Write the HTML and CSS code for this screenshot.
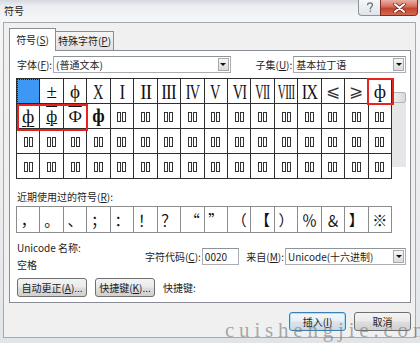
FILE: index.html
```html
<!DOCTYPE html>
<html lang="zh">
<head>
<meta charset="utf-8">
<title>符号</title>
<link rel="stylesheet" href="styles.css">
</head>
<body>
<div class="window">
  <div class="titlebar">
    <div class="title">符号</div>
    <div class="caption">
      <div class="cap-help">
        <svg width="8" height="11" viewBox="0 0 8 11"><path d="M1.5 3.2 C1.5 1.6 2.6 0.8 4 0.8 C5.5 0.8 6.5 1.7 6.5 3 C6.5 4.6 4.4 4.8 4.4 6.6 L4.4 7.4" fill="none" stroke="#6d7680" stroke-width="1.3"/><rect x="3.7" y="8.6" width="1.4" height="1.4" fill="#6d7680"/></svg>
      </div>
      <div class="cap-close">
        <svg width="13" height="10" viewBox="0 0 13 10"><path d="M2 1.2 L11 8.8 M11 1.2 L2 8.8" stroke="#6b2318" stroke-width="3.4" stroke-linecap="round"/><path d="M2 1.2 L11 8.8 M11 1.2 L2 8.8" stroke="#fff" stroke-width="2" stroke-linecap="round"/></svg>
      </div>
    </div>
  </div>

  <div class="client">
    <div class="tabs">
      <div class="tab sel">符号(<u>S</u>)</div>
      <div class="tab other">特殊字符(<u>P</u>)</div>
    </div>

    <div class="panel">
      <div class="font-row">
        <span class="lbl l-font">字体(<u>F</u>):</span>
        <div class="combo c-font"><span class="val">(普通文本)</span><span class="arrow"></span></div>
        <span class="lbl l-subset">子集(<u>U</u>):</span>
        <div class="combo c-subset"><span class="val">基本拉丁语</span><span class="arrow"></span></div>
      </div>

      <div class="grid-area">
        <div class="grid">
          <div class="c cur"></div>
          <div class="c">±</div>
          <div class="c">ϕ</div>
          <div class="c"><span class="r r-x">X</span></div>
          <div class="c"><span class="r r-i">I</span></div>
          <div class="c"><span class="r r-ii">II</span></div>
          <div class="c"><span class="r r-iii">III</span></div>
          <div class="c"><span class="r r-iv">IV</span></div>
          <div class="c"><span class="r r-v">V</span></div>
          <div class="c"><span class="r r-vi">VI</span></div>
          <div class="c"><span class="r r-vii">VII</span></div>
          <div class="c"><span class="r r-viii">VIII</span></div>
          <div class="c"><span class="r r-ix">IX</span></div>
          <div class="c ineq">⩽</div>
          <div class="c ineq">⩾</div>
          <div class="c">ф</div>

          <div class="c"><span class="ph-u">ф</span></div>
          <div class="c"><span class="ph-uo">ф</span></div>
          <div class="c"><span class="ph-o">Ф</span></div>
          <div class="c"><span class="ph-b">ф</span></div>
          <div class="c t"></div><div class="c t"></div><div class="c t"></div><div class="c t"></div>
          <div class="c t"></div><div class="c t"></div><div class="c t"></div><div class="c t"></div>
          <div class="c t"></div><div class="c t"></div><div class="c t"></div><div class="c t"></div>

          <div class="c t"></div><div class="c t"></div><div class="c t"></div><div class="c t"></div>
          <div class="c t"></div><div class="c t"></div><div class="c t"></div><div class="c t"></div>
          <div class="c t"></div><div class="c t"></div><div class="c t"></div><div class="c t"></div>
          <div class="c t"></div><div class="c t"></div><div class="c t"></div><div class="c t"></div>

          <div class="c t"></div><div class="c t"></div><div class="c t"></div><div class="c t"></div>
          <div class="c t"></div><div class="c t"></div><div class="c t"></div><div class="c t"></div>
          <div class="c t"></div><div class="c t"></div><div class="c t"></div><div class="c t"></div>
          <div class="c t"></div><div class="c t"></div><div class="c t"></div><div class="c t"></div>

          <div class="mark m1"></div>
          <div class="mark m2"></div>
        </div>
        <div class="vscroll"><div class="thumb"></div><div class="track"></div></div>
      </div>

      <div class="recent-lbl">近期使用过的符号(<u>R</u>):</div>
      <div class="recent">
        <div class="rc">，</div><div class="rc">。</div><div class="rc">、</div><div class="rc">；</div>
        <div class="rc">：</div><div class="rc">！</div><div class="rc">？</div><div class="rc">“</div>
        <div class="rc">”</div><div class="rc">（</div><div class="rc">【</div><div class="rc">）</div>
        <div class="rc">％</div><div class="rc">＆</div><div class="rc">】</div><div class="rc">※</div>
      </div>

      <div class="info">
        <div class="name"><div>Unicode 名称:</div><div>空格</div></div>
        <span class="lbl">字符代码(<u>C</u>):</span>
        <div class="edit">0020</div>
        <span class="lbl l-from">来自(<u>M</u>):</span>
        <div class="combo c-from"><span class="val">Unicode(十六进制)</span><span class="arrow"></span></div>
      </div>

      <div class="btnrow">
        <div class="btn b-auto">自动更正(<u>A</u>)...</div>
        <div class="btn b-key">快捷键(<u>K</u>)...</div>
        <span class="lbl l-key">快捷键:</span>
      </div>
    </div>

    <div class="footer">
      <div class="btn b-ok">插入(<u>I</u>)</div>
      <div class="btn b-cancel">取消</div>
    </div>
  </div>

  <div class="watermark">cuishengjie.com</div>
</div>
</body>
</html>
```

FILE: styles.css
```css
body {
  margin: 0;
}

.window {
  position: relative;
  width: 420px;
  height: 343px;
  overflow: hidden;
  background: linear-gradient(180deg, #d5d9de 0px, #eceef1 6px, #f5f6f7 20px, #e2e5e8 100%);
  font-family: "Noto Sans CJK SC", "Liberation Sans", sans-serif;
  font-size: 10px;
  color: #1c1c1c;
}

u {
  text-decoration: underline;
  text-underline-offset: 1px;
}

/* title bar */
.titlebar {
  height: 22px;
  display: flex;
}

.title {
  margin: 4px 0 0 4px;
  line-height: 14px;
  font-size: 10px;
  color: #222;
}

.caption {
  margin-left: auto;
  margin-right: 2px;
  display: flex;
  height: 16px;
}

.cap-help {
  width: 22px;
  height: 16px;
  box-sizing: border-box;
  border: 1px solid #8b939b;
  border-top: none;
  border-right: none;
  border-radius: 0 0 0 4px;
  background: linear-gradient(#f6f8fa, #dfe4e9);
  display: flex;
  align-items: center;
  justify-content: center;
}

.cap-close {
  width: 38px;
  height: 16px;
  box-sizing: border-box;
  border: 1px solid #7b2e24;
  border-top: none;
  border-radius: 0 0 4px 0;
  background: linear-gradient(#e9b0a4, #d86a58 45%, #c5432f 55%, #d46a52);
  display: flex;
  align-items: center;
  justify-content: center;
}

/* client area */
.client {
  margin: 0 4px 0 3px;
  height: 316px;
  box-sizing: border-box;
  border: 1px solid #a3aab2;
  background: #f0f0f0;
  padding: 5px 4px 0 5px;
}

.tabs {
  position: relative;
  z-index: 1;
  display: flex;
  align-items: flex-end;
  height: 23px;
  margin-bottom: -1px;
}

.tab {
  box-sizing: border-box;
  border: 1px solid #898c95;
  display: flex;
  align-items: center;
  justify-content: center;
  line-height: 14px;
}

.tab.sel {
  width: 47px;
  height: 23px;
  border-bottom: none;
  background: #fff;
  padding-bottom: 1px;
}

.tab.other {
  width: 58px;
  height: 20px;
  border-left: none;
  background: linear-gradient(#f4f4f4, #e2e2e2);
}

.panel {
  height: 253px;
  box-sizing: border-box;
  border: 1px solid #898c95;
  background: #fff;
  padding: 5px 4px 0 6px;
}

.lbl {
  white-space: nowrap;
  line-height: 14px;
}

/* font row */
.font-row {
  display: flex;
  align-items: center;
  height: 17px;
}

.l-font {
  margin-left: 1px;
}

.combo {
  box-sizing: border-box;
  height: 17px;
  border: 1px solid #abadb3;
  border-top-color: #8e9299;
  background: #fff;
  display: flex;
  align-items: center;
  margin-left: 1px;
}

.combo .val {
  flex: 1;
  padding-left: 2px;
  line-height: 14px;
  white-space: nowrap;
}

.combo .arrow {
  width: 11px;
  height: 13px;
  margin-right: 1px;
  box-sizing: border-box;
  border: 1px solid #a9a9a9;
  background: linear-gradient(#f7f7f7, #dadada);
  display: flex;
  align-items: center;
  justify-content: center;
}

.combo .arrow::after {
  content: "";
  border-left: 3px solid transparent;
  border-right: 3px solid transparent;
  border-top: 3px solid #111;
}

.c-font {
  width: 181px;
}

.l-subset {
  margin-left: 25px;
}

.c-subset {
  width: 115px;
}

/* symbol grid */
.grid-area {
  display: flex;
  margin-top: 5px;
}

.grid {
  position: relative;
  width: 376px;
  box-sizing: border-box;
  display: grid;
  grid-template-columns: repeat(16, 1fr);
  grid-auto-rows: 25px;
  border-left: 1px solid #2e2e2e;
  border-top: 1px solid #2e2e2e;
}

.c {
  border-right: 1px solid #2e2e2e;
  border-bottom: 1px solid #2e2e2e;
  display: flex;
  align-items: center;
  justify-content: center;
  font-family: "Liberation Serif", serif;
  font-size: 19px;
  line-height: 1;
  overflow: hidden;
  color: #111;
}

.c.cur {
  background: #3d98f5;
  outline: 1px dotted #1a1a1a;
  outline-offset: -1px;
}

.r {
  display: inline-block;
  font-size: 20px;
  padding-top: 2px;
  white-space: nowrap;
}

.r-x { transform: scaleX(0.72); }
.r-i { transform: scaleX(0.85); }
.r-ii { transform: scaleX(0.95); letter-spacing: -1px; }
.r-iii { transform: scaleX(0.85); letter-spacing: -1px; }
.r-iv { transform: scaleX(0.72); letter-spacing: -1px; }
.r-v { transform: scaleX(0.72); }
.r-vi { transform: scaleX(0.72); letter-spacing: -1px; }
.r-vii { transform: scaleX(0.58); letter-spacing: -1px; }
.r-viii { transform: scaleX(0.55); letter-spacing: -1px; }
.r-ix { transform: scaleX(0.82); letter-spacing: -1px; }

.ineq {
  font-family: "DejaVu Sans", sans-serif;
  font-weight: 200;
  font-size: 17px;
  color: #333;
}

.ph-u {
  text-decoration: underline;
  text-underline-offset: 3px;
  text-decoration-thickness: 1px;
}

.ph-uo {
  text-decoration: underline overline;
  text-decoration-thickness: 1px;
  font-size: 17px;
}

.ph-o {
  text-decoration: overline;
  text-decoration-thickness: 1px;
  font-size: 17px;
}

.ph-b {
  font-weight: bold;
  font-size: 18px;
}

.c.t {
  gap: 1px;
  padding-top: 1px;
}

.c.t::before,
.c.t::after {
  content: "";
  display: block;
  width: 2px;
  height: 8px;
  border: 1px solid #333;
}

.mark {
  position: absolute;
  box-sizing: border-box;
  border: 2px solid #e8231f;
}

.m1 {
  left: 350px;
  top: -1px;
  width: 27px;
  height: 27px;
}

.m2 {
  left: 0;
  top: 25px;
  width: 71px;
  height: 27px;
}

.vscroll {
  width: 14px;
  height: 101px;
  box-sizing: border-box;
  padding-top: 14px;
  display: flex;
  flex-direction: column;
}

.thumb {
  height: 11px;
  box-sizing: border-box;
  border: 1px solid #b3b3b3;
  border-radius: 2px;
  background: linear-gradient(90deg, #f0f0f0, #d8d8d8);
}

.track {
  height: 64px;
  background: #e6e6e6;
}

/* recent */
.recent-lbl {
  margin-top: 11px;
  line-height: 14px;
  padding-left: 1px;
}

.recent {
  margin-top: 2px;
  width: 376px;
  height: 27px;
  box-sizing: border-box;
  display: grid;
  grid-template-columns: repeat(16, 1fr);
  border: 1px solid #8c8c8c;
  border-right: none;
}

.rc {
  border-right: 1px solid #8c8c8c;
  display: flex;
  align-items: center;
  justify-content: center;
  font-family: "Noto Sans CJK SC", sans-serif;
  font-size: 15px;
  line-height: 1;
  color: #111;
}

/* info */
.info {
  margin-top: 8px;
  height: 31px;
  display: flex;
  align-items: center;
}

.name {
  width: 130px;
  padding-left: 1px;
  display: flex;
  flex-direction: column;
  gap: 3px;
  line-height: 14px;
}

.edit {
  width: 38px;
  height: 17px;
  box-sizing: border-box;
  border: 1px solid #abadb3;
  border-top-color: #8e9299;
  margin-left: 1px;
  padding-left: 2px;
  line-height: 15px;
  background: #fff;
}

.l-from {
  margin-left: 7px;
}

.c-from {
  width: 123px;
}

/* buttons */
.btnrow {
  margin-top: 6px;
  height: 19px;
  display: flex;
  align-items: center;
  padding-left: 1px;
}

.btn {
  height: 19px;
  box-sizing: border-box;
  border: 1px solid #707070;
  border-radius: 3px;
  background: linear-gradient(#f3f3f3, #ebebeb 45%, #dddddd 55%, #d0d0d0);
  display: flex;
  align-items: center;
  justify-content: center;
  line-height: 14px;
  white-space: nowrap;
}

.b-auto {
  width: 70px;
}

.b-key {
  width: 60px;
  margin-left: 8px;
}

.l-key {
  margin-left: 8px;
}

.footer {
  display: flex;
  justify-content: flex-end;
  gap: 8px;
  margin-top: 9px;
}

.b-ok,
.b-cancel {
  width: 57px;
}

.b-ok {
  border-color: #3c7fb1;
  box-shadow: inset 0 0 0 1px #a8def6;
  background: linear-gradient(#f2f7fa, #e9eff3 45%, #dae3ea 55%, #cfd9e1);
}

/* watermark overlay */
.watermark {
  position: absolute;
  left: 225px;
  top: 318px;
  font-family: "Liberation Serif", serif;
  font-size: 21px;
  line-height: 25px;
  letter-spacing: 4.8px;
  color: rgba(120, 120, 120, 0.62);
  white-space: nowrap;
}
```
